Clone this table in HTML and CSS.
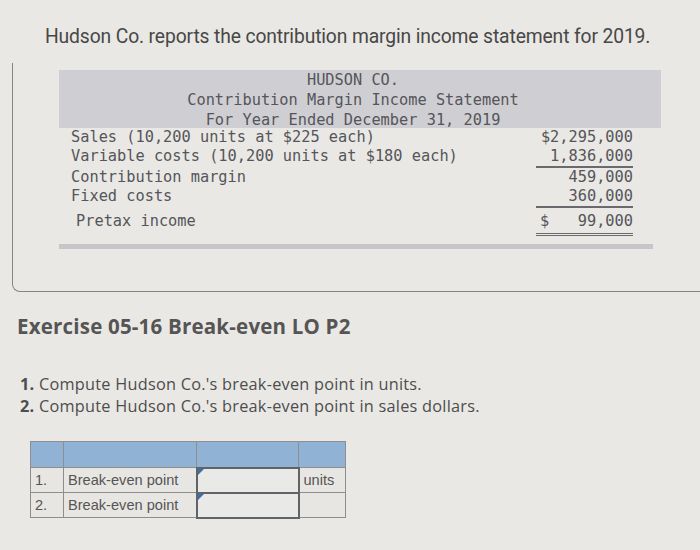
FILE: index.html
```html
<!DOCTYPE html>
<html>
<head>
<meta charset="utf-8">
<link rel="stylesheet" href="styles.css">
</head>
<body>
<p class="intro">Hudson Co. reports the contribution margin income statement for 2019.</p>
<div class="box">
  <div class="stmt">
    <div class="stmt-head">
      <div class="head-text">
        <div>HUDSON CO.</div>
        <div>Contribution Margin Income Statement</div>
        <div>For Year Ended December 31, 2019</div>
      </div>
    </div>
    <div class="rows">
      <div class="lbl">Sales (10,200 units at $225 each)</div><div class="amt">$2,295,000</div>
      <div class="lbl">Variable costs (10,200 units at $180 each)</div><div class="amt single">1,836,000</div>
      <div class="lbl">Contribution margin</div><div class="amt">459,000</div>
      <div class="lbl">Fixed costs</div><div class="amt single">360,000</div>
      <div class="lbl total">Pretax income</div><div class="amt total double"><span>$</span><span>99,000</span></div>
    </div>
    <div class="stmt-foot"></div>
  </div>
</div>
<h2 class="exercise">Exercise 05-16 Break-even LO P2</h2>
<ol class="tasks">
  <li><b>1.</b> Compute Hudson Co.'s break-even point in units.</li>
  <li><b>2.</b> Compute Hudson Co.'s break-even point in sales dollars.</li>
</ol>
<table class="answer">
  <colgroup><col class="w-num"><col class="w-lbl"><col class="w-in"><col class="w-unit"></colgroup>
  <tr class="hdr"><td></td><td></td><td></td><td></td></tr>
  <tr><td>1.</td><td>Break-even point</td><td class="c-in"><span class="flag"></span></td><td>units</td></tr>
  <tr><td>2.</td><td>Break-even point</td><td class="c-in"><span class="flag"></span></td><td></td></tr>
</table>
</body>
</html>
```
FILE: styles.css
```css
html, body {
  margin: 0;
  padding: 0;
}
body {
  width: 700px;
  height: 550px;
  overflow: hidden;
  background: #e9e8e4;
  font-family: Roboto, "Liberation Sans", sans-serif;
  color: #4a4a4a;
}
.intro {
  margin: 0;
  padding: 25px 0 0 45px;
  font-size: 19.3px;
  line-height: 24px;
  letter-spacing: -0.13px;
  color: #474747;
}
.box {
  margin: 14px 0 0 12px;
  height: 221px;
  border-left: 1.5px solid #858585;
  border-bottom: 1.5px solid #858585;
  border-bottom-left-radius: 8px;
  padding-top: 7px;
}
.stmt {
  margin-left: 46px;
  width: 602px;
  font-family: "DejaVu Sans Mono", monospace;
  font-size: 15.3px;
  color: #55555a;
}
.stmt-head {
  background: #cfcfd3;
  height: 58px;
  width: 602px;
}
.head-text {
  width: 588px;
  text-align: center;
  line-height: 20px;
}
.rows {
  display: grid;
  grid-template-columns: 465px 97px;
  padding-left: 12px;
  line-height: 19px;
}
.lbl {
  height: 19px;
}
.amt {
  text-align: right;
  height: 19px;
}
.amt.single {
  border-bottom: 2px solid #6a6a6e;
}
.lbl.total, .amt.total {
  margin-top: 4px;
}
.lbl.total {
  padding-left: 5px;
}
.amt.total {
  display: flex;
  justify-content: space-between;
  padding-left: 4px;
}
.amt.double {
  border-bottom: 3px double #6a6a6e;
  height: 21px;
}
.stmt-foot {
  margin-top: 8px;
  height: 5px;
  width: 594px;
  background: #c6c6c8;
}
.exercise {
  margin: 21px 0 0 17px;
  font-family: "Open Sans", Lato, sans-serif;
  font-weight: bold;
  font-size: 20.5px;
  line-height: 26px;
  letter-spacing: 0.2px;
  color: #555;
}
.tasks {
  list-style: none;
  margin: 35px 0 0 20px;
  padding: 0;
  font-family: "Open Sans", Lato, sans-serif;
  font-size: 16.3px;
  line-height: 21.5px;
  letter-spacing: 0.25px;
  color: #4d4d4d;
}
.answer {
  margin: 24px 0 0 30px;
  border-collapse: collapse;
  table-layout: fixed;
  width: 315px;
  font-family: "Liberation Sans", Arial, sans-serif;
  font-size: 14.6px;
  color: #555;
}
.w-num { width: 33px; }
.w-lbl { width: 133px; }
.w-in { width: 102px; }
.w-unit { width: 47px; }
.answer td {
  border: 1px solid #8e8e8e;
  height: 25px;
  padding: 0 4px;
  background: #e7e6e2;
  box-sizing: border-box;
}
.answer tr.hdr td {
  background: #8fb2d5;
  height: 26px;
}
.c-in { position: relative; }
.answer tr:not(.hdr) td.c-in {
  border: 2px solid #606468;
  background: #e9e9e7;
}
.flag {
  position: absolute;
  left: 0;
  top: 0;
  width: 0;
  height: 0;
  border-top: 6px solid #3a6fa8;
  border-right: 6px solid transparent;
}
```
